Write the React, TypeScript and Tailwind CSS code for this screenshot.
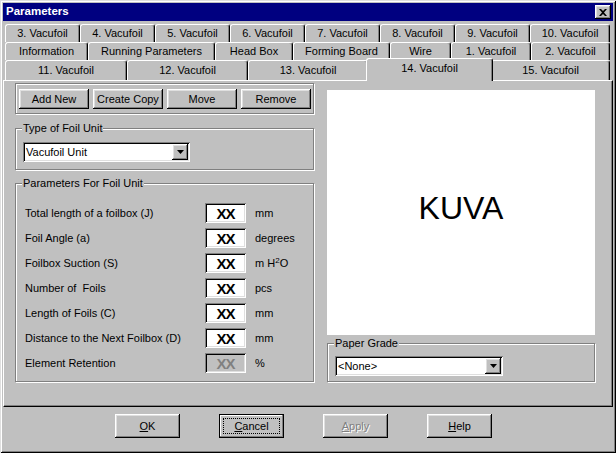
const raised =
  'shadow-[inset_-1px_-1px_0_#000,inset_1px_1px_0_#fff,inset_-2px_-2px_0_#808080,inset_2px_2px_0_#dfdfdf]'
const sunken =
  'shadow-[inset_1px_1px_0_#808080,inset_-1px_-1px_0_#fff,inset_2px_2px_0_#000,inset_-2px_-2px_0_#dfdfdf]'
const etched = 'border border-[#808080] shadow-[inset_1px_1px_0_#fff,1px_1px_0_#fff]'

type TabDef = { label: string; w: string; active?: boolean }

const row1: TabDef[] = [
  { label: '3. Vacufoil', w: 'w-[75px]' },
  { label: '4. Vacufoil', w: 'w-[75px]' },
  { label: '5. Vacufoil', w: 'w-[75px]' },
  { label: '6. Vacufoil', w: 'w-[75px]' },
  { label: '7. Vacufoil', w: 'w-[75px]' },
  { label: '8. Vacufoil', w: 'w-[75px]' },
  { label: '9. Vacufoil', w: 'w-[75px]' },
  { label: '10. Vacufoil', w: 'w-[80px]' },
]

const row2: TabDef[] = [
  { label: 'Information', w: 'w-[83px]' },
  { label: 'Running Parameters', w: 'w-[127px]' },
  { label: 'Head Box', w: 'w-[78px]' },
  { label: 'Forming Board', w: 'w-[97px]' },
  { label: 'Wire', w: 'w-[61px]' },
  { label: '1. Vacufoil', w: 'w-[80px]' },
  { label: '2. Vacufoil', w: 'w-[79px]' },
]

const row3: TabDef[] = [
  { label: '11. Vacufoil', w: 'w-[122px]' },
  { label: '12. Vacufoil', w: 'w-[121px]' },
  { label: '13. Vacufoil', w: 'w-[120px]' },
  { label: '14. Vacufoil', w: 'w-[123px]', active: true },
  { label: '15. Vacufoil', w: 'w-[119px]' },
]

const params = [
  { label: 'Total length of a foilbox (J)', unit: 'mm' },
  { label: 'Foil Angle (a)', unit: 'degrees' },
  { label: 'Foilbox Suction (S)', unit: 'H2O' },
  { label: 'Number of  Foils', unit: 'pcs' },
  { label: 'Length of Foils (C)', unit: 'mm' },
  { label: 'Distance to the Next Foilbox (D)', unit: 'mm' },
  { label: 'Element Retention', unit: '%', disabled: true },
]

function Tab({ tab }: { tab: TabDef }) {
  if (tab.active) {
    return (
      <div
        className={`relative z-10 -mx-[2px] -mt-[2px] flex h-[23px] w-[127px] items-start justify-center rounded-t-[3px] border-l border-t border-r border-white border-r-black bg-[#c0c0c0] pt-[4px] shadow-[inset_-1px_0_0_#808080] whitespace-pre`}
      >
        {tab.label}
      </div>
    )
  }
  return (
    <div
      className={`flex h-full ${tab.w} items-center justify-center rounded-t-[3px] border-l border-t border-r border-white border-r-black bg-[#c0c0c0] shadow-[inset_-1px_0_0_#808080] whitespace-pre`}
    >
      {tab.label}
    </div>
  )
}

function GroupLabel({ text }: { text: string }) {
  return (
    <span className="absolute -top-[7px] left-[6px] bg-[#c0c0c0] px-[1px] leading-[13px]">{text}</span>
  )
}

function Combo({ value, w }: { value: string; w: string }) {
  return (
    <div className={`flex h-[20px] ${w} items-center justify-between bg-white pl-[3px] pr-[2px] ${sunken}`}>
      <span>{value}</span>
      <div className={`flex h-[16px] w-[16px] items-center justify-center bg-[#c0c0c0] ${raised}`}>
        <svg width="7" height="4" viewBox="0 0 7 4">
          <path d="M0 0h7L3.5 4z" fill="#000" />
        </svg>
      </div>
    </div>
  )
}

function ToolButton({ label }: { label: string }) {
  return (
    <button className={`flex h-[20px] w-[70px] items-center justify-center bg-[#c0c0c0] ${raised}`}>
      {label}
    </button>
  )
}

export default function App() {
  return (
    <div
      className={`flex h-[453px] w-[616px] flex-col bg-[#c0c0c0] p-[3px] font-['Liberation_Sans',Arial,sans-serif] text-[11px] leading-none text-black shadow-[inset_1px_1px_0_#dfdfdf,inset_-1px_-1px_0_#000,inset_2px_2px_0_#fff,inset_-2px_-2px_0_#808080]`}
    >
      {/* title bar */}
      <div className="flex h-[18px] shrink-0 items-center justify-between bg-[#000080] pl-[3px] pr-[2px]">
        <span className="text-[11.5px] font-bold text-white">Parameters</span>
        <div className={`flex h-[14px] w-[16px] items-center justify-center bg-[#c0c0c0] ${raised}`}>
          <svg width="8" height="7" viewBox="0 0 8 7">
            <path d="M0 0h2l2 2 2-2h2L5 3.5 8 7H6L4 5 2 7H0l3-3.5z" fill="#000" />
          </svg>
        </div>
      </div>

      {/* tab rows */}
      <div className="mt-[3px] flex flex-col px-[2px]">
        <div className="flex h-[18px]">
          {row1.map((t) => (
            <Tab key={t.label} tab={t} />
          ))}
        </div>
        <div className="flex h-[18px]">
          {row2.map((t) => (
            <Tab key={t.label} tab={t} />
          ))}
        </div>
        <div className="flex h-[20px]">
          {row3.map((t) => (
            <Tab key={t.label} tab={t} />
          ))}
        </div>
      </div>

      {/* page */}
      <div className="flex h-[327px] shrink-0 gap-[13px] border-l border-t border-r border-b border-white border-r-black border-b-black pl-[11px] pt-[2px] shadow-[inset_-1px_-1px_0_#808080]">
        <div className="flex w-[299px] flex-col">
          <div className={`flex gap-[4px] pb-[4px] pl-[3px] pt-[5px] ${etched}`}>
            <ToolButton label="Add New" />
            <ToolButton label="Create Copy" />
            <ToolButton label="Move" />
            <ToolButton label="Remove" />
          </div>

          <div className={`relative mt-[14px] pb-[7px] pl-[7px] pt-[13px] ${etched}`}>
            <GroupLabel text="Type of Foil Unit" />
            <Combo value="Vacufoil Unit" w="w-[167px]" />
          </div>

          <div className={`relative mt-[13px] flex flex-col gap-[5px] pb-[8px] pl-[9px] pt-[19px] ${etched}`}>
            <GroupLabel text="Parameters For Foil Unit" />
            {params.map((p) => (
              <div key={p.label} className="flex h-[20px] items-center">
                <span className="w-[180px] whitespace-pre">{p.label}</span>
                <div
                  className={`flex h-[20px] w-[41px] items-center justify-center ${sunken} ${
                    p.disabled ? 'bg-[#c0c0c0] text-[#808080]' : 'bg-white text-black'
                  }`}
                >
                  <span className="text-[15px] font-bold tracking-[-1px]">XX</span>
                </div>
                <span className="ml-[9px]">
                  {p.unit === 'H2O' ? (
                    <>
                      m H<sup className="text-[8px]">2</sup>O
                    </>
                  ) : (
                    p.unit
                  )}
                </span>
              </div>
            ))}
          </div>
        </div>

        <div className="mt-[7px] flex w-[268px] flex-col">
          <div className="flex h-[245px] items-center justify-center bg-white pb-[10px] text-[32px]">KUVA</div>
          <div className={`relative mt-[8px] pb-[5px] pl-[7px] pt-[12px] ${etched}`}>
            <GroupLabel text="Paper Grade" />
            <Combo value="<None>" w="w-[168px]" />
          </div>
        </div>
      </div>

      {/* dialog buttons */}
      <div className="mt-[7px] flex gap-[39px] pl-[112px]">
        <button className={`flex h-[24px] w-[65px] items-center justify-center bg-[#c0c0c0] ${raised}`}>
          <span>
            <span className="underline underline-offset-[1px]">O</span>K
          </span>
        </button>
        <button className="h-[24px] w-[65px] border border-black bg-[#c0c0c0] p-0">
          <div
            className={`flex h-full w-full items-center justify-center p-[3px] shadow-[inset_-1px_-1px_0_#808080,inset_1px_1px_0_#fff]`}
          >
            <span className="flex h-full w-full items-center justify-center border border-dotted border-black">
              <span>
                <span className="underline underline-offset-[1px]">C</span>ancel
              </span>
            </span>
          </div>
        </button>
        <button
          className={`flex h-[24px] w-[65px] items-center justify-center bg-[#c0c0c0] text-[#808080] [text-shadow:1px_1px_0_#fff] ${raised}`}
        >
          <span>
            <span className="underline underline-offset-[1px]">A</span>pply
          </span>
        </button>
        <button className={`flex h-[24px] w-[65px] items-center justify-center bg-[#c0c0c0] ${raised}`}>
          <span>
            <span className="underline underline-offset-[1px]">H</span>elp
          </span>
        </button>
      </div>
    </div>
  )
}
